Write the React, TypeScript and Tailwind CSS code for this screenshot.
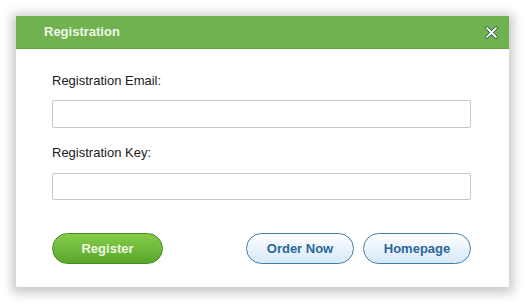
export default function App() {
  const font = { fontFamily: '"Liberation Sans", Arial, sans-serif' };
  return (
    <div className="w-[525px] h-[304px] bg-white p-[16px]" style={font}>
      <div className="w-[493px] h-[271px] bg-white flex flex-col shadow-[0_2px_10px_4px_rgba(0,0,0,0.22)]">
        <div className="h-[33px] bg-[#71b250] border-b border-[#62a444] flex items-center justify-between pl-[28px] pr-[11px]">
          <span className="text-[13px] font-bold text-[#eef7e6]">Registration</span>
          <svg width="13" height="13" viewBox="0 0 13 13">
            <path d="M2 2 L11 11 M11 2 L2 11" stroke="#1f4a3a" strokeWidth="3.2" strokeLinecap="round" />
            <path d="M2 2 L11 11 M11 2 L2 11" stroke="#ffffff" strokeWidth="1.8" strokeLinecap="round" />
          </svg>
        </div>
        <div className="flex flex-col pl-[36px] pr-[38px] pt-[24px]">
          <label className="text-[13px] leading-[16px] text-[#1a1a1a]">Registration Email:</label>
          <input className="mt-[11px] h-[28px] w-[419px] border border-[#c8c8c8] rounded-[2px] bg-white outline-none" />
          <label className="mt-[17px] text-[13px] leading-[16px] text-[#1a1a1a]">Registration Key:</label>
          <input className="mt-[12px] h-[27px] w-[419px] border border-[#c8c8c8] rounded-[2px] bg-white outline-none" />
          <div className="mt-[33px] flex items-center">
            <button className="w-[111px] h-[31px] rounded-full border border-[#4a8a22] bg-gradient-to-b from-[#86cc4a] to-[#58a72a] text-[13px] font-bold text-[#eef8e0]">
              Register
            </button>
            <div className="ml-auto flex gap-[9px]">
              <button className="w-[108px] h-[31px] rounded-full border border-[#3f7fae] bg-gradient-to-b from-[#ffffff] to-[#d6e8f7] text-[13px] font-bold text-[#2b679a]">
                Order Now
              </button>
              <button className="w-[108px] h-[31px] rounded-full border border-[#3f7fae] bg-gradient-to-b from-[#ffffff] to-[#d6e8f7] text-[13px] font-bold text-[#2b679a]">
                Homepage
              </button>
            </div>
          </div>
        </div>
      </div>
    </div>
  );
}
